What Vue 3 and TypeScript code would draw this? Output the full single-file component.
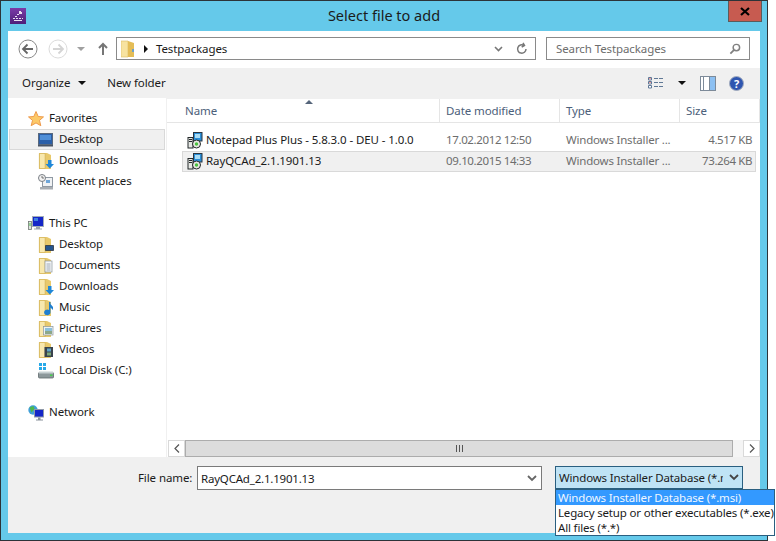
<script setup lang="ts">
type IconName = 'star' | 'monitor' | 'downloads' | 'recent' | 'pc' | 'desktopF' | 'documents' | 'music' | 'pictures' | 'videos' | 'disk' | 'network'

interface NavItem {
  name: string
  icon: IconName
  selected?: boolean
}
interface NavGroup {
  name: string
  icon: IconName
  children: NavItem[]
}
interface FileRow {
  name: string
  date: string
  type: string
  size: string
  selected?: boolean
}

const groups: NavGroup[] = [
  {
    name: 'Favorites',
    icon: 'star',
    children: [
      { name: 'Desktop', icon: 'monitor', selected: true },
      { name: 'Downloads', icon: 'downloads' },
      { name: 'Recent places', icon: 'recent' },
    ],
  },
  {
    name: 'This PC',
    icon: 'pc',
    children: [
      { name: 'Desktop', icon: 'desktopF' },
      { name: 'Documents', icon: 'documents' },
      { name: 'Downloads', icon: 'downloads' },
      { name: 'Music', icon: 'music' },
      { name: 'Pictures', icon: 'pictures' },
      { name: 'Videos', icon: 'videos' },
      { name: 'Local Disk (C:)', icon: 'disk' },
    ],
  },
  { name: 'Network', icon: 'network', children: [] },
]

const files: FileRow[] = [
  { name: 'Notepad Plus Plus - 5.8.3.0 - DEU - 1.0.0', date: '17.02.2012 12:50', type: 'Windows Installer ...', size: '4.517 KB' },
  { name: 'RayQCAd_2.1.1901.13', date: '09.10.2015 14:33', type: 'Windows Installer ...', size: '73.264 KB', selected: true },
]

const fileTypes = ['Windows Installer Database (*.msi)', 'Legacy setup or other executables (*.exe)', 'All files (*.*)']
</script>

<template>
  <div class="window">
    <header class="titlebar">
      <svg class="app-icon" width="16" height="16" viewBox="0 0 16 16">
        <defs>
          <linearGradient id="appbg" x1="0" y1="0" x2="0" y2="1">
            <stop offset="0" stop-color="#7b3aa8" />
            <stop offset="1" stop-color="#4e1f78" />
          </linearGradient>
        </defs>
        <rect width="16" height="16" fill="url(#appbg)" />
        <path d="M9 3h2v1h1v2H9zM7 6h2v1H7zM5 8h2v1H5zM3 10h2v1H3zM6 10h2v1H6zM9 10h2v1H9zM12 10h1v1h-1zM4 12h8v1H4z" fill="#e9dff0" />
      </svg>
      <span class="title">Select file to add</span>
      <div class="close">
        <svg width="10" height="9" viewBox="0 0 10 9"><path d="M1 1l8 7M9 1L1 8" stroke="#000" stroke-width="2.2" /></svg>
      </div>
    </header>

    <div class="dialog">
      <div class="navbar">
        <div class="round-btn">
          <svg width="20" height="20" viewBox="0 0 20 20"><circle cx="10" cy="10" r="9" fill="#fff" stroke="#8a8a8a" /><path d="M5 10h10M9.500 5.500L5 10l4.500 4.500" fill="none" stroke="#666" stroke-width="1.800" /></svg>
        </div>
        <div class="round-btn off">
          <svg width="20" height="20" viewBox="0 0 20 20"><circle cx="10" cy="10" r="9" fill="#fff" stroke="#dcdcdc" /><path d="M5 10h10M10.500 5.500L15 10l-4.500 4.500" fill="none" stroke="#d4d4d4" stroke-width="1.800" /></svg>
        </div>
        <span class="mini-caret"></span>
        <svg class="up" width="10" height="13" viewBox="0 0 10 13"><path d="M5 13V2M1 6l4-4 4 4" fill="none" stroke="#767676" stroke-width="2" /></svg>
        <div class="address">
          <svg class="folder-big" width="14" height="18" viewBox="0 0 14 18">
            <path d="M0 1h7v16H0z" fill="#f7e3a0" stroke="#dcbc62" stroke-width=".6" />
            <path d="M7 1l6 2v14H7z" fill="#e4bd57" />
            <path d="M11 9h2v3h-2z" fill="#6da0c8" />
          </svg>
          <span class="crumb-arrow"></span>
          <span class="crumb">Testpackages</span>
          <span class="address-tools">
            <svg width="9" height="6" viewBox="0 0 9 6"><path d="M1 1l3.500 3.500L8 1" fill="none" stroke="#777" stroke-width="1.600" /></svg>
            <svg width="12" height="13" viewBox="0 0 12 13"><path d="M10 7a4.200 4.200 0 1 1-2-3.600M7 .8l1.500 2.700L5.700 5" fill="none" stroke="#777" stroke-width="1.500" /></svg>
          </span>
        </div>
        <div class="search">
          <span>Search Testpackages</span>
          <svg width="12" height="12" viewBox="0 0 13 13"><circle cx="8" cy="5" r="3.500" fill="none" stroke="#808080" stroke-width="1.600" /><path d="M5.500 7.500L1.500 11.500" stroke="#808080" stroke-width="2" /></svg>
        </div>
      </div>

      <div class="toolbar">
        <span class="tool">Organize</span>
        <span class="caret"></span>
        <span class="tool new-folder">New folder</span>
        <div class="tool-right">
          <svg width="16" height="12" viewBox="0 0 16 12">
            <path d="M.5.500h3v2.500h-3zM.5 4.500h3V7h-3zM.5 8.500h3V11h-3z" fill="#fff" stroke="#5f7896" />
            <path d="M6 1.500h4M11 1.500h4M6 5.500h4M11 5.500h4M6 9.500h4M11 9.500h4" stroke="#5f7896" />
            <rect x="1.500" y="1" width="1" height="1" fill="#d33" />
            <rect x="1.500" y="5" width="1" height="1" fill="#d33" />
          </svg>
          <span class="caret view-caret"></span>
          <svg class="pane" width="16" height="15" viewBox="0 0 16 15">
            <rect x=".5" y=".5" width="15" height="14" fill="#fff" stroke="#7d8a99" />
            <rect x="10" y="1" width="5" height="13" fill="#8cc0f2" />
            <path d="M3.500 1v13M9.500 1v13" stroke="#7d8a99" />
          </svg>
          <svg width="15" height="15" viewBox="0 0 15 15">
            <circle cx="7.500" cy="7.500" r="7" fill="#2f56b0" stroke="#a4adbd" />
            <text x="7.500" y="11.500" class="help-mark">?</text>
          </svg>
        </div>
      </div>

      <div class="main">
        <nav class="sidebar">
          <div v-for="group in groups" :key="group.name" class="group">
            <div class="group-head">
              <svg class="icon" width="16" height="16" viewBox="0 0 16 16">
                <template v-if="group.icon === 'star'">
                  <path d="M8 .5l2.200 5 5.300.4-4 3.500 1.300 5.300L8 11.900l-4.800 2.800 1.300-5.300-4-3.500 5.300-.4z" fill="#fcc968" stroke="#ee9a4c" />
                </template>
                <template v-else-if="group.icon === 'pc'">
                  <rect x="4.500" y=".5" width="11" height="10" fill="#1426c8" stroke="#a3adb8" />
                  <path d="M6 2h4v3H6z" fill="#3f7fe0" />
                  <path d="M8 11h4v1.500H8zM6 12.500h8v1H6z" fill="#9ba3ad" />
                  <rect x=".5" y="5.500" width="3" height="8" fill="#dfe3df" stroke="#6f7872" stroke-width=".8" />
                  <rect x="1.500" y="7" width="1" height="3" fill="#46c04a" />
                </template>
                <template v-else>
                  <circle cx="5" cy="5" r="4.700" fill="#3f9fd8" />
                  <path d="M1.500 2.500l4-1.500 1 3-3 3.500z" fill="#4fb84a" />
                  <rect x="6.500" y="4.500" width="9" height="7.500" fill="#1426c8" stroke="#8f99a8" />
                  <path d="M10 12.500h2.500v2H10zM8 14.500h7v1H8z" fill="#8a929c" />
                </template>
              </svg>
              <span>{{ group.name }}</span>
            </div>
            <div
              v-for="item in group.children"
              :key="item.name"
              class="nav-item"
              :class="{ selected: item.selected }"
            >
              <svg class="icon" width="16" height="16" viewBox="0 0 16 16">
                <template v-if="item.icon === 'monitor'">
                  <rect x=".5" y="1.500" width="14" height="11" fill="#2b5fa8" stroke="#59687c" />
                  <path d="M2 3h11v5H2z" fill="#4f8ed6" />
                  <path d="M0 13h15v1.500H0z" fill="#4a5464" />
                </template>
                <template v-else-if="item.icon === 'recent'">
                  <rect x="4.500" y="3.500" width="10" height="9" fill="#f0f2f4" stroke="#8f99a3" />
                  <circle cx="4" cy="4" r="3.500" fill="#f2f2f2" stroke="#7a7f85" />
                  <path d="M4 2v2h2" fill="none" stroke="#555" stroke-width=".8" />
                  <path d="M8 6h4v3H8z" fill="#6ea6d9" />
                  <path d="M2 13h13v2.500H2z" fill="#a8adb2" />
                </template>
                <template v-else-if="item.icon === 'disk'">
                  <path d="M1 0h3v3H1zM5 0h3v3H5zM1 4h3v3H1zM5 4h3v3H5z" fill="#27a9e8" />
                  <rect x=".5" y="9.500" width="15" height="5.500" rx="1" fill="#8d989b" stroke="#5f6a6c" stroke-width=".8" />
                  <path d="M1 8.500h14v2H1z" fill="#c7d0d2" />
                  <rect x="12" y="11.500" width="2.500" height="1.500" fill="#44d04a" />
                </template>
                <template v-else>
                  <path d="M1 0h8l4 2v14H1z" fill="#e8c96c" />
                  <path d="M1.400.400h5.800v15.200H1.400z" fill="#f8e8ae" stroke="#d3b258" stroke-width=".8" />
                  <path v-if="item.icon === 'downloads'" d="M10 7h3.500v4H16l-4.200 4.500L7.500 11H10z" fill="#1f87d8" />
                  <path v-else-if="item.icon === 'desktopF'" d="M7.500 8.500h8v5h-8z" fill="#24558f" stroke="#2c3440" stroke-width=".8" />
                  <template v-else-if="item.icon === 'documents'">
                    <rect x="7" y="3" width="7" height="11" fill="#f4f6f8" stroke="#8b949c" stroke-width=".7" />
                    <path d="M8.500 6h4M8.500 8h4M8.500 10h4M8.500 12h4" stroke="#8a97a5" stroke-width=".8" />
                  </template>
                  <path v-else-if="item.icon === 'music'" d="M11 2h1.500v10.500A3.200 2.800 0 1 1 11 10zM12.500 4l2.500 3v3l-2.500-2.500z" fill="#1f7fd0" />
                  <template v-else-if="item.icon === 'pictures'">
                    <rect x="5.500" y="5.500" width="9.500" height="8.500" fill="#eef2f2" stroke="#8b949c" stroke-width=".7" />
                    <path d="M7 7h7v3H7z" fill="#8cc0dd" />
                    <path d="M7 10h7v3H7z" fill="#8da88a" />
                  </template>
                  <template v-else-if="item.icon === 'videos'">
                    <rect x="6.500" y="5" width="8.500" height="10" fill="#39424c" />
                    <path d="M9 6.500h4v3H9z" fill="#5fa4c8" />
                    <path d="M9 10.500h4v3H9z" fill="#7ba97a" />
                  </template>
                </template>
              </svg>
              <span>{{ item.name }}</span>
            </div>
          </div>
        </nav>

        <section class="listing">
          <div class="columns">
            <div class="col col-name">Name<span class="sort"></span></div>
            <div class="col col-date">Date modified</div>
            <div class="col col-type">Type</div>
            <div class="col col-size">Size</div>
          </div>
          <div class="rows">
            <div v-for="file in files" :key="file.name" class="row" :class="{ selected: file.selected }">
              <div class="cell cell-name">
                <svg class="icon" width="16" height="17" viewBox="0 0 16 17">
                  <rect x="1" y="5.500" width="5" height="10.500" fill="#e6e8e4" stroke="#23282a" />
                  <path d="M2 7.500h3M2 9.500h3" stroke="#23282a" />
                  <rect x="6.500" y=".5" width="8.500" height="8.500" fill="#2b8fd8" stroke="#2a3540" />
                  <path d="M8 2h5v4H8z" fill="#a8dcf5" />
                  <circle cx="9.500" cy="12" r="4" fill="#e6e8e0" stroke="#23282a" />
                  <circle cx="9.500" cy="12" r="1.700" fill="#49c23f" />
                </svg>
                <span>{{ file.name }}</span>
              </div>
              <div class="cell cell-date">{{ file.date }}</div>
              <div class="cell cell-type">{{ file.type }}</div>
              <div class="cell cell-size">{{ file.size }}</div>
            </div>
          </div>
          <div class="hscroll">
            <div class="scroll-btn"><svg width="6" height="9" viewBox="0 0 6 9"><path d="M5 .5l-4 4 4 4" fill="none" stroke="#555" stroke-width="1.200" /></svg></div>
            <div class="scroll-thumb"><span class="grip"></span></div>
            <div class="scroll-rest"></div>
            <div class="scroll-btn"><svg width="6" height="9" viewBox="0 0 6 9"><path d="M1 .5l4 4-4 4" fill="none" stroke="#555" stroke-width="1.200" /></svg></div>
          </div>
        </section>
      </div>

      <footer class="bottom">
        <label class="file-label">File name:</label>
        <div class="file-input">
          <span>RayQCAd_2.1.1901.13</span>
          <svg width="10" height="7" viewBox="0 0 10 7"><path d="M1 1l4 4 4-4" fill="none" stroke="#666" stroke-width="1.800" /></svg>
        </div>
        <div class="type-select">
          <div class="type-current">
            <span class="type-text">Windows Installer Database (*.msi)</span>
            <svg width="10" height="7" viewBox="0 0 10 7"><path d="M1 1l4 4 4-4" fill="none" stroke="#444" stroke-width="1.800" /></svg>
          </div>
          <ul class="type-list">
            <li v-for="(t, i) in fileTypes" :key="t" :class="{ active: i === 0 }">{{ t }}</li>
          </ul>
        </div>
      </footer>
    </div>
  </div>
</template>

<style>
html, body {
  margin: 0;
  background: #fff;
}
</style>

<style scoped>
.window {
  width: 768px;
  height: 541px;
  box-sizing: border-box;
  border: 1px solid #2c3338;
  background: #65c9ea;
  padding: 0 7px 7px;
  display: flex;
  flex-direction: column;
  font-family: "Noto Sans", "Open Sans", sans-serif;
  font-size: 11.5px;
  letter-spacing: -0.1px;
  color: #1a1a1a;
}
.titlebar {
  height: 30px;
  flex: none;
  display: flex;
  align-items: center;
  position: relative;
}
.app-icon {
  margin: -1px 0 0 2px;
}
.title {
  position: absolute;
  left: 0;
  right: 0;
  text-align: center;
  font-size: 14.5px;
  letter-spacing: 0;
  color: #1b1b1b;
  top: 4px;
}
.close {
  position: absolute;
  top: 0;
  right: -2px;
  width: 32px;
  height: 20px;
  background: #c75b50;
  border: 1px solid #5b5b5b;
  border-top: 0;
  display: flex;
  align-items: center;
  justify-content: center;
}
.dialog {
  flex: 1;
  min-height: 0;
  background: #fff;
  display: flex;
  flex-direction: column;
}
.navbar {
  height: 37px;
  box-sizing: border-box;
  padding: 0 0 2px 10px;
  flex: none;
  display: flex;
  align-items: center;
}
.round-btn {
  width: 20px;
  height: 20px;
  margin-right: 10px;
}
.mini-caret {
  width: 0;
  height: 0;
  border: 4px solid transparent;
  border-top: 4px solid #a0a0a0;
  border-bottom: 0;
  margin-left: -1px;
  margin-right: 13px;
}
.up {
  margin-right: 8px;
}
.address {
  width: 414px;
  height: 21px;
  border: 1px solid #8a8a8a;
  display: flex;
  align-items: center;
  padding-left: 4px;
  margin-right: 10px;
}
.crumb-arrow {
  width: 0;
  height: 0;
  border-left: 4px solid #111;
  border-top: 4px solid transparent;
  border-bottom: 4px solid transparent;
  margin: 0 8px 0 9px;
}
.address-tools {
  margin-left: auto;
  display: flex;
  align-items: center;
  gap: 13px;
  padding-right: 7px;
}
.search {
  width: 185px;
  height: 21px;
  border: 1px solid #8a8a8a;
  display: flex;
  align-items: center;
  justify-content: space-between;
  padding: 0 8px 0 9px;
  color: #6d6d6d;
}
.toolbar {
  height: 30px;
  flex: none;
  background: #f0f0f0;
  display: flex;
  align-items: center;
  padding-left: 14px;
}
.tool {
  padding-bottom: 2px;
}
.caret {
  width: 0;
  height: 0;
  border: 4px solid transparent;
  border-top: 4px solid #111;
  border-bottom: 0;
  margin-left: 8px;
}
.new-folder {
  margin-left: 21px;
}
.tool-right {
  margin-left: auto;
  display: flex;
  align-items: center;
  padding-right: 16px;
}
.view-caret {
  margin-left: 14px;
}
.pane {
  margin: 0 13px 0 14px;
}
.help-mark {
  font-size: 11px;
  font-weight: 700;
  fill: #fff;
  text-anchor: middle;
}
.main {
  flex: 1;
  min-height: 0;
  display: flex;
}
.sidebar {
  width: 158px;
  flex: none;
  border-right: 1px solid #f0f0f0;
  padding-top: 10px;
}
.group {
  margin-bottom: 21px;
}
.group-head {
  height: 21px;
  display: flex;
  align-items: center;
  padding-left: 20px;
  gap: 5px;
}
.group-head span,
.nav-item span {
  padding-bottom: 2px;
}
.nav-item {
  height: 21px;
  box-sizing: border-box;
  margin: 0 1px;
  display: flex;
  align-items: center;
  padding-left: 28px;
  gap: 5px;
  border: 1px solid transparent;
}
.nav-item.selected {
  background: #f0f0f0;
  border-color: #d9d9d9;
}
.icon {
  flex: none;
}
.listing {
  flex: 1;
  min-width: 0;
  display: flex;
  flex-direction: column;
}
.columns {
  height: 25px;
  box-sizing: border-box;
  flex: none;
  display: flex;
  border-top: 1px solid #f0f0f0;
  border-bottom: 1px solid #e5e5e5;
  color: #4c607a;
}
.col {
  display: flex;
  align-items: center;
  padding: 0 0 1px 6px;
  border-right: 1px solid #e5e5e5;
  box-sizing: border-box;
  position: relative;
}
.col-name {
  width: 273px;
  padding-left: 18px;
}
.col-date {
  width: 120px;
}
.col-type {
  width: 120px;
}
.col-size {
  width: 80px;
}
.sort {
  position: absolute;
  top: 1px;
  left: 138px;
  width: 0;
  height: 0;
  border-left: 4px solid transparent;
  border-right: 4px solid transparent;
  border-bottom: 4px solid #55657a;
}
.rows {
  flex: 1;
  padding: 7px 0 0 15px;
}
.row {
  width: 574px;
  height: 21px;
  box-sizing: border-box;
  display: flex;
  align-items: center;
  border: 1px solid transparent;
  color: #6d6d6d;
}
.row.selected {
  background: #f0f0f0;
  border-color: #d9d9d9;
}
.cell {
  box-sizing: border-box;
  white-space: nowrap;
  padding-bottom: 2px;
}
.cell-name {
  width: 263px;
  display: flex;
  align-items: center;
  gap: 3px;
  padding: 0 0 0 4px;
  color: #1a1a1a;
}
.cell-name span {
  padding-bottom: 2px;
}
.cell-date {
  width: 120px;
  letter-spacing: -0.37px;
}
.cell-type {
  width: 119px;
  letter-spacing: -0.2px;
}
.cell-size {
  width: 70px;
  text-align: right;
  padding-right: 3px;
  letter-spacing: -0.4px;
}
.hscroll {
  height: 17px;
  flex: none;
  display: flex;
  margin-left: 1px;
  background: #f4f4f4;
}
.scroll-btn {
  width: 17px;
  box-sizing: border-box;
  background: #fff;
  border: 1px solid #d9d9d9;
  display: flex;
  align-items: center;
  justify-content: center;
}
.scroll-thumb {
  width: 548px;
  background: #dcdcdc;
  border: 1px solid #acacac;
  box-sizing: border-box;
  display: flex;
  align-items: center;
  justify-content: center;
}
.grip {
  width: 7px;
  height: 7px;
  background: repeating-linear-gradient(90deg, #555 0 1px, transparent 1px 3px);
}
.scroll-rest {
  flex: 1;
}
.bottom {
  height: 76px;
  flex: none;
  background: #f0f0f0;
  display: flex;
  align-items: flex-start;
  padding-top: 9px;
  box-sizing: border-box;
}
.file-label {
  margin-left: 130px;
  width: 59px;
  line-height: 24px;
}
.file-input {
  width: 345px;
  height: 24px;
  box-sizing: border-box;
  background: #fff;
  border: 1px solid #7a7a7a;
  display: flex;
  align-items: center;
  justify-content: space-between;
  padding: 0 4px 0 3px;
  color: #1a1a1a;
  letter-spacing: -0.2px;
}
.type-select {
  margin-left: 13px;
  position: relative;
  width: 188px;
  letter-spacing: -0.17px;
}
.type-current {
  height: 23px;
  box-sizing: border-box;
  background: #bfe3f5;
  border: 1px solid #2a5f80;
  display: flex;
  align-items: center;
  padding: 0 3px 0 3px;
}
.type-text {
  flex: 1;
  overflow: hidden;
  white-space: nowrap;
  margin-right: 6px;
}
.type-list {
  position: absolute;
  top: 23px;
  left: 0;
  width: 220px;
  margin: 0;
  padding: 0;
  list-style: none;
  background: #fff;
  border: 1px solid #2a5f80;
  box-sizing: border-box;
  line-height: 15px;
  white-space: nowrap;
  z-index: 2;
}
.type-list li {
  padding-left: 2px;
}
.type-list li.active {
  background: #3399ff;
  color: #f0f7ff;
}
</style>
